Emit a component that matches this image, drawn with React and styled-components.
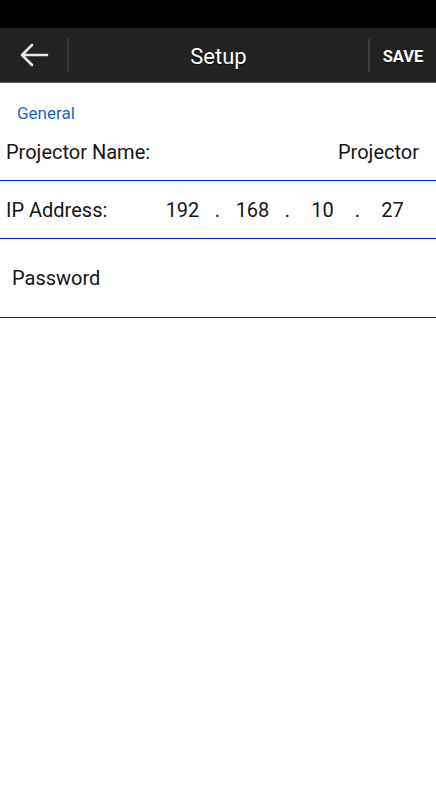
import React from 'react'
import styled, {createGlobalStyle} from 'styled-components'

const Global = createGlobalStyle`
	html, body {
		margin: 0;
		padding: 0;
		background: #fff;
		font-family: Roboto, "Liberation Sans", sans-serif;
	}
`

const Screen = styled.div`
	width: 436px;
	min-height: 800px;
	background: #fff;
`

const StatusBar = styled.div`
	height: 28px;
	background: #000;
`

const Toolbar = styled.div`
	height: 54px;
	background: #222222;
	border-bottom: 1px solid #5a5a5a;
	display: flex;
	align-items: center;
`

const IconButton = styled.button`
	width: 67px;
	height: 100%;
	border: none;
	background: none;
	padding: 0 0 0 1px;
	display: flex;
	align-items: center;
	justify-content: center;
	color: #e8e8e8;
`

const Divider = styled.div`
	width: 2px;
	height: 33px;
	background: #3a3a3a;
`

const Title = styled.div`
	flex: 1;
	text-align: center;
	color: #fff;
	font-size: 22px;
	padding-top: 3px;
	text-shadow: 0 1px 1px rgba(0, 0, 0, 0.6);
`

const SaveButton = styled.button`
	width: 66px;
	height: 100%;
	border: none;
	background: none;
	color: #fff;
	font-family: Roboto, "Liberation Sans", sans-serif;
	font-weight: 700;
	font-size: 16.5px;
	padding: 3px 0 0 0;
	text-shadow: 0 1px 1px rgba(0, 0, 0, 0.6);
`

const SectionLabel = styled.div`
	color: #1a63cc;
	font-size: 17px;
	padding: 20px 0 0 17px;
	height: 21px;
`

const Row = styled.div`
	display: flex;
	align-items: center;
	height: ${p => p.h}px;
	padding: 0 ${p => p.pr || 0}px 0 ${p => p.pl || 6}px;
	border-bottom: 1px solid #0022dd;
	font-size: 20px;
	color: #151515;
`

const Label = styled.span`
	flex: 1;
`

const Octets = styled.div`
	display: flex;
	align-items: center;
	margin-right: 25px;
`

const Octet = styled.span`
	width: 37px;
	text-align: center;
`

const Dot = styled.span`
	width: 33px;
	text-align: center;
`

const BackArrow = () => (
	<svg width='30' height='26' viewBox='0 0 30 26' fill='none' stroke='currentColor' strokeWidth='2.6' strokeLinecap='round' strokeLinejoin='round'>
		<path d='M28 13H3M13 3L3 13l10 10'/>
	</svg>
)

const ip = ['192', '168', '10', '27']

const App = () => (
	<Screen>
		<Global/>
		<StatusBar/>
		<Toolbar>
			<IconButton><BackArrow/></IconButton>
			<Divider/>
			<Title>Setup</Title>
			<Divider/>
			<SaveButton>SAVE</SaveButton>
		</Toolbar>
		<SectionLabel>General</SectionLabel>
		<Row h={56} pr={17}>
			<Label>Projector Name:</Label>
			<span>Projector</span>
		</Row>
		<Row h={57}>
			<Label>IP Address:</Label>
			<Octets>
				{ip.map((o, i) => (
					<React.Fragment key={i}>
						{i > 0 && <Dot>.</Dot>}
						<Octet>{o}</Octet>
					</React.Fragment>
				))}
			</Octets>
		</Row>
		<Row h={78} pl={12}>
			<Label>Password</Label>
		</Row>
	</Screen>
)

export default App
